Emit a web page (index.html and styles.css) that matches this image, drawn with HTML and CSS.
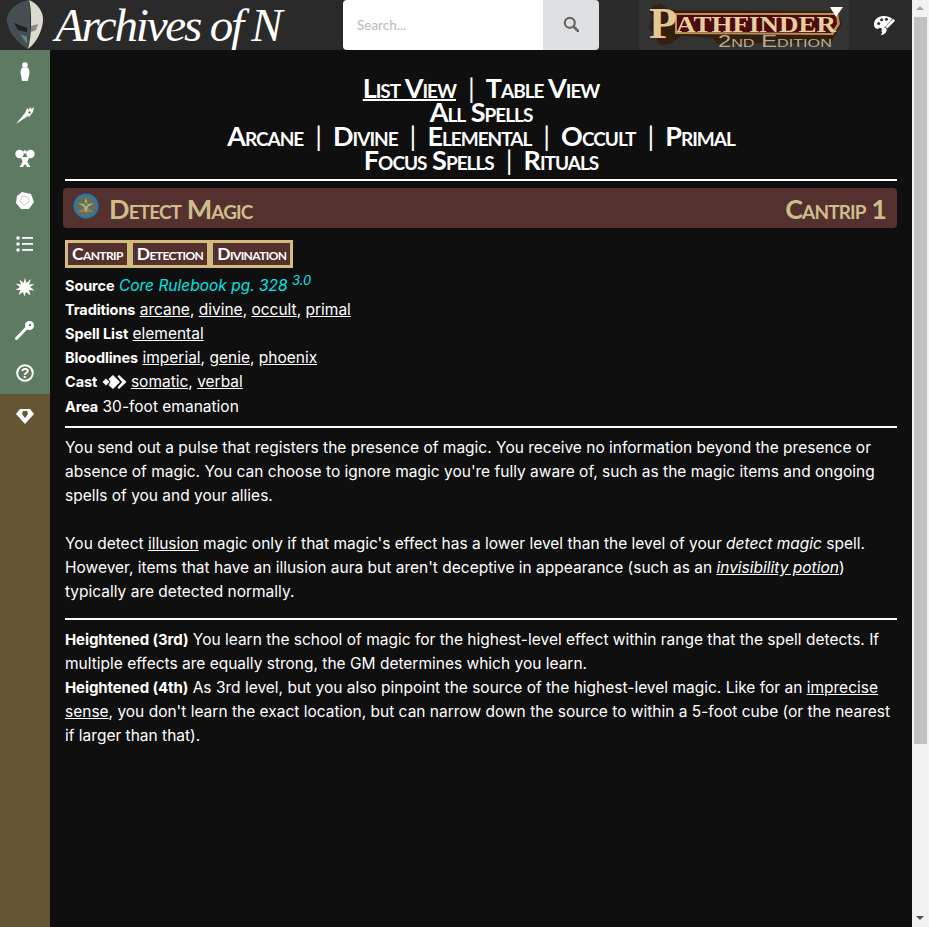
FILE: index.html
```html
<!DOCTYPE html>
<html lang="en">
<head>
  <meta charset="UTF-8" />
  <meta name="viewport" content="width=device-width, initial-scale=1.0" />
  <title>Detect Magic - Archives of Nethys</title>
  <link rel="stylesheet" href="styles.css">
</head>
<body>
  <div class="page">
    <div class="top-bar">
      <div class="brand">
        <svg class="mask" viewBox="0 0 50 50" width="50" height="50">
          <path d="M29 0 C16 2 6 12 7 21 C8 32 18 44 28 49 C31 38 31 10 29 0Z" fill="#454e51"/>
          <path d="M29 0 C37 3 44 12 43 21 C42 32 36 43 28 49 C32 36 32 10 29 0Z" fill="#dcd9cf"/>
          <path d="M14 23 L27 28 L27 32 L18 30Z" fill="#1d2123"/>
          <path d="M20 34 L27 37 L27 44Z" fill="#5b8a92"/>
          <path d="M31 26 L38 24 L36 30 L31 32Z" fill="#8b887e"/>
        </svg>
        <span class="brand-name">Archives of N</span>
      </div>
      <div class="search">
        <input class="search-input" type="text" placeholder="Search...">
        <button class="search-btn" aria-label="Search">
          <svg viewBox="0 0 16 16" width="16" height="16"><circle cx="6.8" cy="6.8" r="5" fill="none" stroke="#666" stroke-width="2.2"/><path d="M10.5 10.5 L15 15" stroke="#666" stroke-width="2.6" stroke-linecap="round"/></svg>
        </button>
      </div>
      <div class="pf-logo">
        <svg viewBox="0 0 210 50" width="210" height="50">
          <path d="M10 9 L16 5 L22 4 L30 10 L198 11 L203 24 L196 36 L192 42 L78 44 L74 38 L42 36 L34 42 L22 46 L17 38 L10 28 L13 18Z" fill="#33200f"/>
          <path d="M36 13 L199 13 L201 24 L194 35 L36 34Z" fill="#b9905c"/>
          <path d="M38 15 L197 15 L198 24 L192 33 L38 32Z" fill="#4d0b0d"/>
          <text class="pf-cap" x="10" y="38" textLength="28" lengthAdjust="spacingAndGlyphs">P</text>
          <text class="pf-title" x="37" y="32" textLength="160" lengthAdjust="spacingAndGlyphs">ATHFINDER</text>
          <text class="pf-sub" x="79" y="47" textLength="114" lengthAdjust="spacingAndGlyphs">2nd Edition</text>
          <path d="M191 7 L204 7 L197 17Z" fill="#fff"/>
        </svg>
      </div>
      <button class="theme-btn" aria-label="Theme">
        <svg viewBox="0 0 24 24" width="23" height="23">
          <path d="M11 2 C5 2 1 6 1 11 C1 15 4 16 6 15 C8 14 10 15 9 17 C8.5 18 9 19 10 19 L12 14 L20 5 C18 3 15 2 11 2Z" fill="#fff"/>
          <circle cx="6" cy="10" r="1.6" fill="#333"/><circle cx="9" cy="6" r="1.6" fill="#333"/><circle cx="14" cy="5.5" r="1.6" fill="#333"/>
          <path d="M21 5 L23 7 L15 15 L13 13Z" fill="#fff"/>
          <path d="M12 14 C14 14 15 16 14 18 C13 21 10 22 8 22 C10 20 9 17 12 14Z" fill="#fff"/>
        </svg>
      </button>
    </div>
    <div class="body-row">
      <nav class="side-nav">
        <div class="side-green">
          <a class="side-item"><svg viewBox="0 0 20 20" width="20" height="20"><ellipse cx="10" cy="3" rx="2.8" ry="2.8" fill="#fff"/><path d="M7 5.500 H13 C14.500 8 15 11 14 13 L13 19 H7 L6 13 C5 11 5.500 8 7 5.500Z" fill="#fff"/></svg></a>
          <a class="side-item"><svg viewBox="0 0 20 20" width="20" height="20"><path d="M1 19 L10 8 L13 11Z" fill="#fff"/><path d="M10 8 L12 3 L14 5 L15 2 L16.5 4 L19 2 L18 7 L14 12 Z" fill="#fff"/><circle cx="14.500" cy="7.500" r="1.200" fill="#5f7a62"/></svg></a>
          <a class="side-item"><svg viewBox="0 0 20 20" width="20" height="20"><g fill="#fff"><circle cx="4.500" cy="6" r="4.200"/><circle cx="15.500" cy="6" r="4.200"/><circle cx="10" cy="4" r="1.800"/><path d="M5 9 H15 L13 12 L12.500 14 L15.500 19 H12 L10 16 L8 19 H4.500 L7.500 14 L7 12Z"/></g></svg></a>
          <a class="side-item"><svg viewBox="0 0 20 20" width="20" height="20"><path d="M7 1 L16 3 L19 11 L14 18 L6 18 L1 12 L2 5Z" fill="#fff"/><path d="M7 5 L13 6 L14 11 L9 14 L5 10Z" fill="none" stroke="#c9d2ca" stroke-width="1"/></svg></a>
          <a class="side-item"><svg viewBox="0 0 20 20" width="20" height="20"><g fill="#fff"><circle cx="3" cy="4" r="1.800"/><circle cx="3" cy="10" r="1.800"/><circle cx="3" cy="16" r="1.800"/><rect x="7" y="3" width="11" height="1.800"/><rect x="7" y="9" width="11" height="1.800"/><rect x="7" y="15" width="11" height="1.800"/></g></svg></a>
          <a class="side-item"><svg viewBox="0 0 20 20" width="20" height="20"><path d="M10 1 L11.5 6 L16 2 L14 7.5 L19.5 7 L15 10 L19.5 13.500 L14 13 L15.5 18.5 L11 15 L9.5 19.5 L8 15 L3.5 18 L5.5 13 L.5 13 L5 10 L.5 6.5 L6 7.5 L4.5 2.5 L8.5 6Z" fill="#fff"/></svg></a>
          <a class="side-item"><svg viewBox="0 0 20 20" width="20" height="20"><path d="M1.500 18.500 L11 8.500" stroke="#fff" stroke-width="3" stroke-linecap="round"/><circle cx="14.5" cy="5.5" r="4.5" fill="#fff"/><circle cx="15" cy="5" r="1.2" fill="#5f7a62"/></svg></a>
          <a class="side-item"><svg viewBox="0 0 20 20" width="20" height="20"><circle cx="10" cy="10" r="7.800" fill="none" stroke="#fff" stroke-width="2"/><text class="help-mark" x="10" y="15">?</text></svg></a>
        </div>
        <div class="side-brown">
          <a class="side-item"><svg viewBox="0 0 20 20" width="20" height="20"><path d="M5 3 H15 L19 8 L10 18 L1 8Z" fill="#fff"/><path d="M8 5 H12 L13 8 L10 12 L7 8Z" fill="#665532"/></svg></a>
        </div>
      </nav>
      <main class="content">
        <div class="view-links">
          <div><a class="on">List View</a><span class="sep">|</span><a>Table View</a></div>
          <div><a>All Spells</a></div>
          <div><a>Arcane</a><span class="sep">|</span><a>Divine</a><span class="sep">|</span><a>Elemental</a><span class="sep">|</span><a>Occult</a><span class="sep">|</span><a>Primal</a></div>
          <div><a>Focus Spells</a><span class="sep">|</span><a>Rituals</a></div>
        </div>
        <hr class="rule rule-top">
        <h1 class="title">
          <span class="title-name">
            <svg class="spell-icon" viewBox="0 0 26 26" width="26" height="26">
              <circle cx="13" cy="13" r="12.500" fill="#2a7aa6"/>
              <circle cx="13" cy="13" r="9.500" fill="#6f6a4e"/>
              <path d="M5 19 L13 13 L21 19Z" fill="#8c7d5c"/>
              <path d="M13 5 L15 11 L21 10 L15 14 L13 20 L11 14 L5 10 L11 11Z" fill="#a9b08a"/>
              <circle cx="13" cy="11" r="2" fill="#5d8a4e"/>
            </svg>
            Detect Magic
          </span>
          <span>Cantrip 1</span>
        </h1>
        <div class="traits">
          <span class="trait">Cantrip</span><span class="trait">Detection</span><span class="trait">Divination</span>
        </div>
        <div class="details">
          <div><b>Source</b> <i class="src">Core Rulebook pg. 328 <sup>3.0</sup></i></div>
          <div><b>Traditions</b> <a>arcane</a>, <a>divine</a>, <a>occult</a>, <a>primal</a></div>
          <div><b>Spell List</b> <a>elemental</a></div>
          <div><b>Bloodlines</b> <a>imperial</a>, <a>genie</a>, <a>phoenix</a></div>
          <div><b>Cast</b> <svg class="action" viewBox="0 0 25 16" width="25" height="16"><g fill="#fff"><path d="M4 4.500 L7.500 8 L4 11.500 L.5 8Z"/><path d="M11 1 L18 8 L11 15 L6.500 11 L8.500 8 L6.500 5Z"/><path d="M17 1 L24.500 8 L17 15 L15.500 13.500 L20 8 L15.500 2.500Z"/></g></svg> <a>somatic</a>, <a>verbal</a></div>
          <div class="area"><b>Area</b> 30-foot emanation</div>
        </div>
        <hr class="rule">
        <p class="text">You send out a pulse that registers the presence of magic. You receive no information beyond the presence or absence of magic. You can choose to ignore magic you're fully aware of, such as the magic items and ongoing spells of you and your allies.</p>
        <p class="text">You detect <a>illusion</a> magic only if that magic's effect has a lower level than the level of your <i>detect magic</i> spell. However, items that have an illusion aura but aren't deceptive in appearance (such as an <i><a>invisibility potion</a></i>) typically are detected normally.</p>
        <hr class="rule rule-wide">
        <p class="text text-last"><b>Heightened (3rd)</b> You learn the school of magic for the highest-level effect within range that the spell detects. If multiple effects are equally strong, the GM determines which you learn.<br>
        <b>Heightened (4th)</b> As 3rd level, but you also pinpoint the source of the highest-level magic. Like for an <a>imprecise sense</a>, you don't learn the exact location, but can narrow down the source to within a 5-foot cube (or the nearest if larger than that).</p>
      </main>
    </div>
    <div class="scrollbar">
      <div class="scroll-arrow up"></div>
      <div class="scroll-thumb"></div>
      <div class="scroll-arrow down"></div>
    </div>
  </div>
</body>
</html>
```

FILE: styles.css
```css
html, body {
  margin: 0;
  height: 100%;
  overflow: hidden;
  background: #0f0f0f;
}
body {
  font-family: 'Inter', sans-serif;
  font-size: 15.5px;
  color: #fff;
}
b {
  font-size: 14.5px;
  letter-spacing: -0.1px;
}
.page {
  display: grid;
  grid-template-columns: 912px 17px;
  grid-template-rows: 50px 1fr;
  height: 100vh;
}
.top-bar {
  grid-column: 1;
  grid-row: 1;
  display: flex;
  background: #2a2a2a;
  height: 50px;
}
.brand {
  width: 343px;
  display: flex;
  overflow: hidden;
}
.mask {
  flex: none;
  margin-right: 5px;
}
.brand-name {
  font-family: 'Liberation Serif', serif;
  font-style: italic;
  font-size: 47px;
  line-height: 50px;
  letter-spacing: -2.2px;
  white-space: nowrap;
}
.search {
  display: flex;
  width: 256px;
  height: 50px;
  border-radius: 4px;
  overflow: hidden;
}
.search-input {
  width: 200px;
  box-sizing: border-box;
  border: none;
  padding: 0 14px;
  font-family: 'Lato', sans-serif;
  font-size: 13.5px;
  background: #fff;
  outline: none;
}
.search-input::placeholder {
  color: #bbb;
}
.search-btn {
  flex: 1;
  border: none;
  background: #dfe0e2;
  padding: 0;
}
.pf-logo {
  margin-left: 40px;
  width: 210px;
  height: 50px;
  background: #333;
}
.pf-logo svg {
  display: block;
  overflow: visible;
}
.pf-cap {
  font-family: 'Liberation Serif', serif;
  font-weight: bold;
  font-size: 44px;
  fill: #e3c795;
}
.pf-title {
  font-family: 'Liberation Serif', serif;
  font-weight: bold;
  font-size: 24px;
  fill: #e8cf9f;
}
.pf-sub {
  font-family: 'Liberation Sans', sans-serif;
  font-variant: small-caps;
  font-size: 16px;
  fill: #b9ad90;
}
.theme-btn {
  flex: 1;
  background: none;
  border: none;
  padding: 0 0 0 7px;
  display: flex;
  align-items: center;
  justify-content: center;
}
.body-row {
  grid-column: 1;
  grid-row: 2;
  display: flex;
  min-height: 0;
}
.side-nav {
  width: 50px;
  flex: none;
  display: flex;
  flex-direction: column;
}
.side-green {
  background: #5f7a62;
}
.side-brown {
  background: #665532;
  flex: 1;
}
.side-item {
  display: flex;
  align-items: center;
  justify-content: center;
  height: 43px;
}
.help-mark {
  font-family: 'Liberation Sans', sans-serif;
  font-weight: bold;
  font-size: 14px;
  text-anchor: middle;
  fill: #fff;
}
.content {
  flex: 1;
  padding: 26px 15px 0 15px;
  min-width: 0;
}
.view-links {
  text-align: center;
  font-family: 'Lato', sans-serif;
  font-variant: small-caps;
  font-weight: 700;
  font-size: 27px;
  letter-spacing: -1px;
  line-height: 24px;
  padding-bottom: 7px;
}
.view-links a.on {
  text-decoration: underline;
  text-decoration-thickness: 2px;
}
.sep {
  margin: 0 12px;
  font-weight: 400;
}
.rule {
  border: none;
  height: 2px;
  background: #fff;
  margin: 0;
}
.rule-top {
  margin-bottom: 7px;
}
.title {
  display: flex;
  justify-content: space-between;
  align-items: center;
  height: 40px;
  margin: 0 0 12px -2px;
  padding: 0 11px;
  border-radius: 4px;
  background: #54302e;
  color: #cdbd8b;
  font-family: 'Lato', sans-serif;
  font-variant: small-caps;
  font-weight: 700;
  font-size: 27px;
  letter-spacing: -0.9px;
}
.title-name {
  display: flex;
  align-items: center;
  gap: 10px;
}
.spell-icon {
  margin-bottom: 4px;
  margin-left: -1px;
}
.traits {
  display: flex;
  margin-bottom: 6px;
}
.trait {
  border: 3px solid #d2bc7e;
  background: #54302e;
  padding: 0 4px;
  height: 22px;
  line-height: 21px;
  font-family: 'Lato', sans-serif;
  font-variant: small-caps;
  font-weight: 700;
  font-size: 17.5px;
  letter-spacing: -0.6px;
}
.details {
  line-height: 24px;
  padding-bottom: 8px;
}
.area {
  padding-top: 1px;
  margin-bottom: -1px;
}
.details a, .text a {
  text-decoration: underline;
}
.src {
  color: #00e5e5;
}
sup {
  font-size: 13px;
  line-height: 0;
}
.action {
  vertical-align: -3px;
}
.text {
  margin: 8px 0 24px;
  line-height: 24px;
}
.text b {
  font-size: 15px;
}
.text-last {
  margin-top: 8px;
}
.rule-wide {
  margin-top: -10px;
}
.scrollbar {
  grid-column: 2;
  grid-row: 1 / 3;
  background: #f1f1f1;
  display: flex;
  flex-direction: column;
  align-items: center;
}
.scroll-arrow {
  height: 17px;
  width: 17px;
  flex: none;
  position: relative;
}
.scroll-arrow.up::after, .scroll-arrow.down::after {
  content: "";
  position: absolute;
  left: 4px;
  border-left: 4px solid transparent;
  border-right: 4px solid transparent;
}
.scroll-arrow.up::after {
  top: 6px;
  border-bottom: 4px solid #a3a3a3;
}
.scroll-arrow.down::after {
  top: 6px;
  border-top: 4px solid #505050;
}
.scroll-thumb {
  width: 13px;
  height: 727px;
  flex: none;
  background: #c1c1c1;
}
.scroll-arrow.down {
  margin-top: auto;
}
```
